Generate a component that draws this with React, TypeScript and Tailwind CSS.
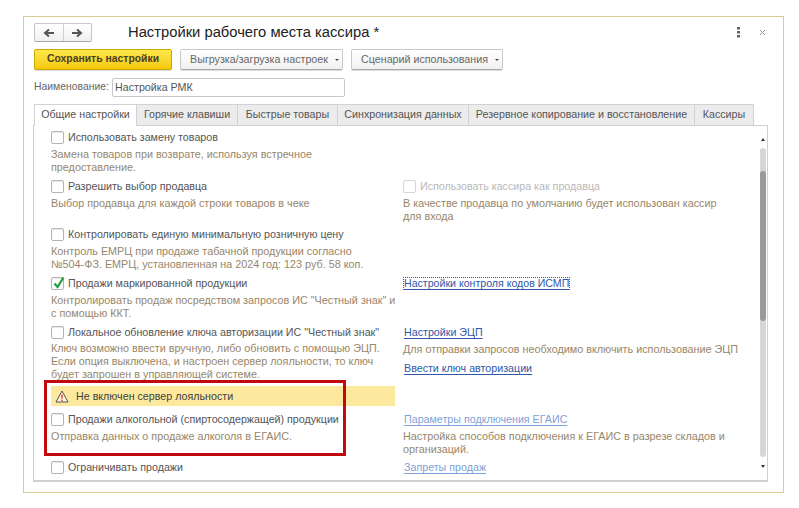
import type { ReactNode } from "react";

const font = "font-['Liberation_Sans',Arial,sans-serif]";

function Checkbox({ checked, disabled }: { checked?: boolean; disabled?: boolean }) {
  return (
    <span
      className={`relative inline-block w-[13px] h-[13px] shrink-0 rounded-[2px] border bg-white ${
        disabled ? "border-[#d6d6d6]" : "border-[#b4b4b4] shadow-[inset_0_1px_1px_#e8e8e8]"
      }`}
    >
      {checked && (
        <svg className="absolute left-[0px] top-[-3px]" width="14" height="15" viewBox="0 0 14 15">
          <path d="M2.5 8.5 L5.5 12 L11.5 2.5" fill="none" stroke="#1f9d3f" strokeWidth="2.2" />
        </svg>
      )}
    </span>
  );
}

function Check({ label, checked, disabled }: { label: string; checked?: boolean; disabled?: boolean }) {
  return (
    <div className="flex items-center h-[19px] gap-[4px] whitespace-nowrap">
      <Checkbox checked={checked} disabled={disabled} />
      <span className={disabled ? "text-[#b8b8b8]" : "text-[#555555]"}>{label}</span>
    </div>
  );
}

function Note({ children }: { children: ReactNode }) {
  return <p className="mt-[1px] text-[10.8px] leading-[13px] whitespace-nowrap text-[#97866a]">{children}</p>;
}

function Link({ children, pale, focused }: { children: ReactNode; pale?: boolean; focused?: boolean }) {
  return (
    <div className="flex items-center h-[19px] whitespace-nowrap pl-px">
      <a
        className={`underline underline-offset-2 ${pale ? "text-[#7f9fd8]" : "text-[#2f58a8]"} ${
          focused ? "outline-1 outline-dotted outline-[#555] text-[10.6px]" : ""
        }`}
      >
        {children}
      </a>
    </div>
  );
}

function Row({ left, right, height }: { left: ReactNode; right?: ReactNode; height: string }) {
  return (
    <div className={`grid grid-cols-[352px_1fr] ${height}`}>
      <div>{left}</div>
      <div>{right}</div>
    </div>
  );
}

function Tab({ label, width, active }: { label: string; width: string; active?: boolean }) {
  return (
    <div
      className={`${width} flex items-center justify-center whitespace-nowrap border border-b-0 border-[#d2d2d2] -ml-px first:ml-0 pb-[2px] ${
        active ? "h-[22px] -mb-px bg-white text-[#555] z-10" : "h-[21px] bg-[#ececec] text-[#555]"
      }`}
    >
      {label}
    </div>
  );
}

function MenuButton({ label, width }: { label: string; width: string }) {
  return (
    <button
      className={`${width} h-[21px] flex items-center justify-center gap-[7px] pl-[6px] whitespace-nowrap rounded-[2px] border border-[#c9c9c9] border-b-[#a8a8a8] bg-gradient-to-b from-white to-[#f1f1f1] text-[#666] shadow-[0_1px_0_#ddd]`}
    >
      {label}
      <span className="w-0 h-0 border-x-[2px] border-x-transparent border-t-[2px] border-t-[#444]" />
    </button>
  );
}

export default function App() {
  return (
    <div className={`${font} w-[799px] h-[508px] bg-white pt-4 pl-[23px] text-[10.7px] leading-none`}>
      <div className="w-[761px] h-[477px] border border-[#d9cb93] pt-[6px] pl-[10px]">
        {/* Title line */}
        <div className="flex items-center h-[19px]">
          <div className="flex w-[58px] h-[19px] rounded-[2px] border border-[#c6c6c6] border-b-[#a8a8a8] bg-gradient-to-b from-white to-[#f0f0f0]">
            <span className="flex-1 flex items-center justify-center border-r border-[#d0d0d0]">
              <svg width="12" height="10" viewBox="0 0 12 10">
                <path d="M11 5H3M6 1.5 2 5l4 3.5" fill="none" stroke="#555" strokeWidth="2" />
              </svg>
            </span>
            <span className="flex-1 flex items-center justify-center">
              <svg width="12" height="10" viewBox="0 0 12 10">
                <path d="M1 5h8M6 1.5 10 5 6 8.5" fill="none" stroke="#555" strokeWidth="2" />
              </svg>
            </span>
          </div>
          <h1 className="ml-[36px] text-[14.75px] text-[#222] font-normal">Настройки рабочего места кассира *</h1>
          <div className="ml-auto mr-[17px] flex items-center gap-[19px]">
            <svg width="3" height="11" viewBox="0 0 3 11">
              <path d="M0 0h3v2.5H0zM0 4h3v2.5H0zM0 8h3v2.5H0z" fill="#666" />
            </svg>
            <svg width="7" height="7" viewBox="0 0 7 7">
              <path d="M1 1l5 5M6 1 1 6" stroke="#999" strokeWidth="1" />
            </svg>
          </div>
        </div>

        {/* Command bar */}
        <div className="mt-[7px] flex gap-[8px]">
          <button className="w-[138px] h-[21px] rounded-[2px] border border-[#c9a800] bg-gradient-to-b from-[#ffe94a] to-[#f5c800] text-[10.4px] font-bold text-[#4a4020] shadow-[0_1px_0_#ddd]">
            Сохранить настройки
          </button>
          <MenuButton label="Выгрузка/загрузка настроек" width="w-[163px]" />
          <MenuButton label="Сценарий использования" width="w-[152px]" />
        </div>

        {/* Name field */}
        <div className="mt-[8px] h-[18px] flex items-center">
          <label className="w-[78px] text-[10.4px] text-[#666]">Наименование:</label>
          <div className="w-[233px] h-[19px] flex items-center pl-[2px] rounded-[2px] border border-[#c8c8c8] bg-white text-[#555]">
            Настройка РМК
          </div>
        </div>

        {/* Tab strip */}
        <div className="mt-[8px] flex h-[21px] items-start">
          <Tab label="Общие настройки" width="w-[103px]" active />
          <Tab label="Горячие клавиши" width="w-[102px]" />
          <Tab label="Быстрые товары" width="w-[101px]" />
          <Tab label="Синхронизация данных" width="w-[132px]" />
          <Tab label="Резервное копирование и восстановление" width="w-[227px]" />
          <Tab label="Кассиры" width="w-[60px]" />
        </div>

        {/* Tab page */}
        <div className="relative -ml-px w-[735px] h-[357px] border border-[#cfcfcf] border-b-2 flex">
          <div className="w-[726px] pl-[17px] pt-[2px]">
            <Row
              height="h-[49px]"
              left={
                <>
                  <Check label="Использовать замену товаров" />
                  <Note>
                    Замена товаров при возврате, используя встречное
                    <br />
                    предоставление.
                  </Note>
                </>
              }
            />
            <Row
              height="h-[48px]"
              left={
                <>
                  <Check label="Разрешить выбор продавца" />
                  <Note>Выбор продавца для каждой строки товаров в чеке</Note>
                </>
              }
              right={
                <>
                  <Check label="Использовать кассира как продавца" disabled />
                  <Note>
                    В качестве продавца по умолчанию будет использован кассир
                    <br />
                    для входа
                  </Note>
                </>
              }
            />
            <Row
              height="h-[49px]"
              left={
                <>
                  <Check label="Контролировать единую минимальную розничную цену" />
                  <Note>
                    Контроль ЕМРЦ при продаже табачной продукции согласно
                    <br />
                    №504-ФЗ. ЕМРЦ, установленная на 2024 год: 123 руб. 58 коп.
                  </Note>
                </>
              }
            />
            <Row
              height="h-[49px]"
              left={
                <>
                  <Check label="Продажи маркированной продукции" checked />
                  <Note>
                    Контролировать продаж посредством запросов ИС "Честный знак" и
                    <br />с помощью ККТ.
                  </Note>
                </>
              }
              right={<Link focused>Настройки контроля кодов ИСМП</Link>}
            />
            <Row
              height="h-[63px]"
              left={
                <>
                  <Check label='Локальное обновление ключа авторизации ИС "Честный знак"' />
                  <div className="-mt-px">
                    <Note>
                      Ключ возможно ввести вручную, либо обновить с помощью ЭЦП.
                      <br />
                      Если опция выключена, и настроен сервер лояльности, то ключ
                      <br />
                      будет запрошен в управляющей системе.
                    </Note>
                  </div>
                </>
              }
              right={
                <>
                  <Link>Настройки ЭЦП</Link>
                  <Note>Для отправки запросов необходимо включить использование ЭЦП</Note>
                  <div className="mt-[3px]">
                    <Link>Ввести ключ авторизации</Link>
                  </div>
                </>
              }
            />

            {/* Loyalty server warning */}
            <div className="w-[344px] h-[20px] mb-[4px] flex items-center bg-[#fde99d] pl-[4px] text-[#3f3f3f]">
              <svg width="14" height="13" viewBox="0 0 14 13">
                <path d="M7 1 13 12H1Z" fill="#fff7d8" stroke="#555" strokeWidth="1" strokeLinejoin="round" />
                <path d="M7 4.5V8.5M7 9.5V11" stroke="#d8262c" strokeWidth="1.3" />
              </svg>
              <span className="ml-[7px]">Не включен сервер лояльности</span>
            </div>

            <Row
              height="h-[48px]"
              left={
                <>
                  <Check label="Продажи алкогольной (спиртосодержащей) продукции" />
                  <Note>Отправка данных о продаже алкоголя в ЕГАИС.</Note>
                </>
              }
              right={
                <>
                  <Link pale>Параметры подключения ЕГАИС</Link>
                  <Note>
                    Настройка способов подключения к ЕГАИС в разрезе складов и
                    <br />
                    организаций.
                  </Note>
                </>
              }
            />
            <Row height="h-[19px]" left={<Check label="Ограничивать продажи" />} right={<Link pale>Запреты продаж</Link>} />
          </div>

          {/* Vertical scroller */}
          <div className="w-[6px] pt-[12px] flex flex-col items-center">
            <span className="w-0 h-0 border-x-[2px] border-x-transparent border-b-[3px] border-b-[#333]" />
            <div className="mt-[7px] w-[6px] h-[309px] rounded-[3px] bg-[#d6d6d6] pt-[23px]">
              <div className="w-[6px] h-[150px] rounded-[3px] bg-[#9a9a9a]" />
            </div>
            <span className="mt-[8px] w-0 h-0 border-x-[2px] border-x-transparent border-t-[3px] border-t-[#333]" />
          </div>

          {/* Highlight frame over the alcohol section */}
          <div className="absolute left-[10px] top-[254px] w-[302px] h-[76px] border-[3px] border-[#c00a0f] pointer-events-none" />
        </div>
      </div>
    </div>
  );
}
